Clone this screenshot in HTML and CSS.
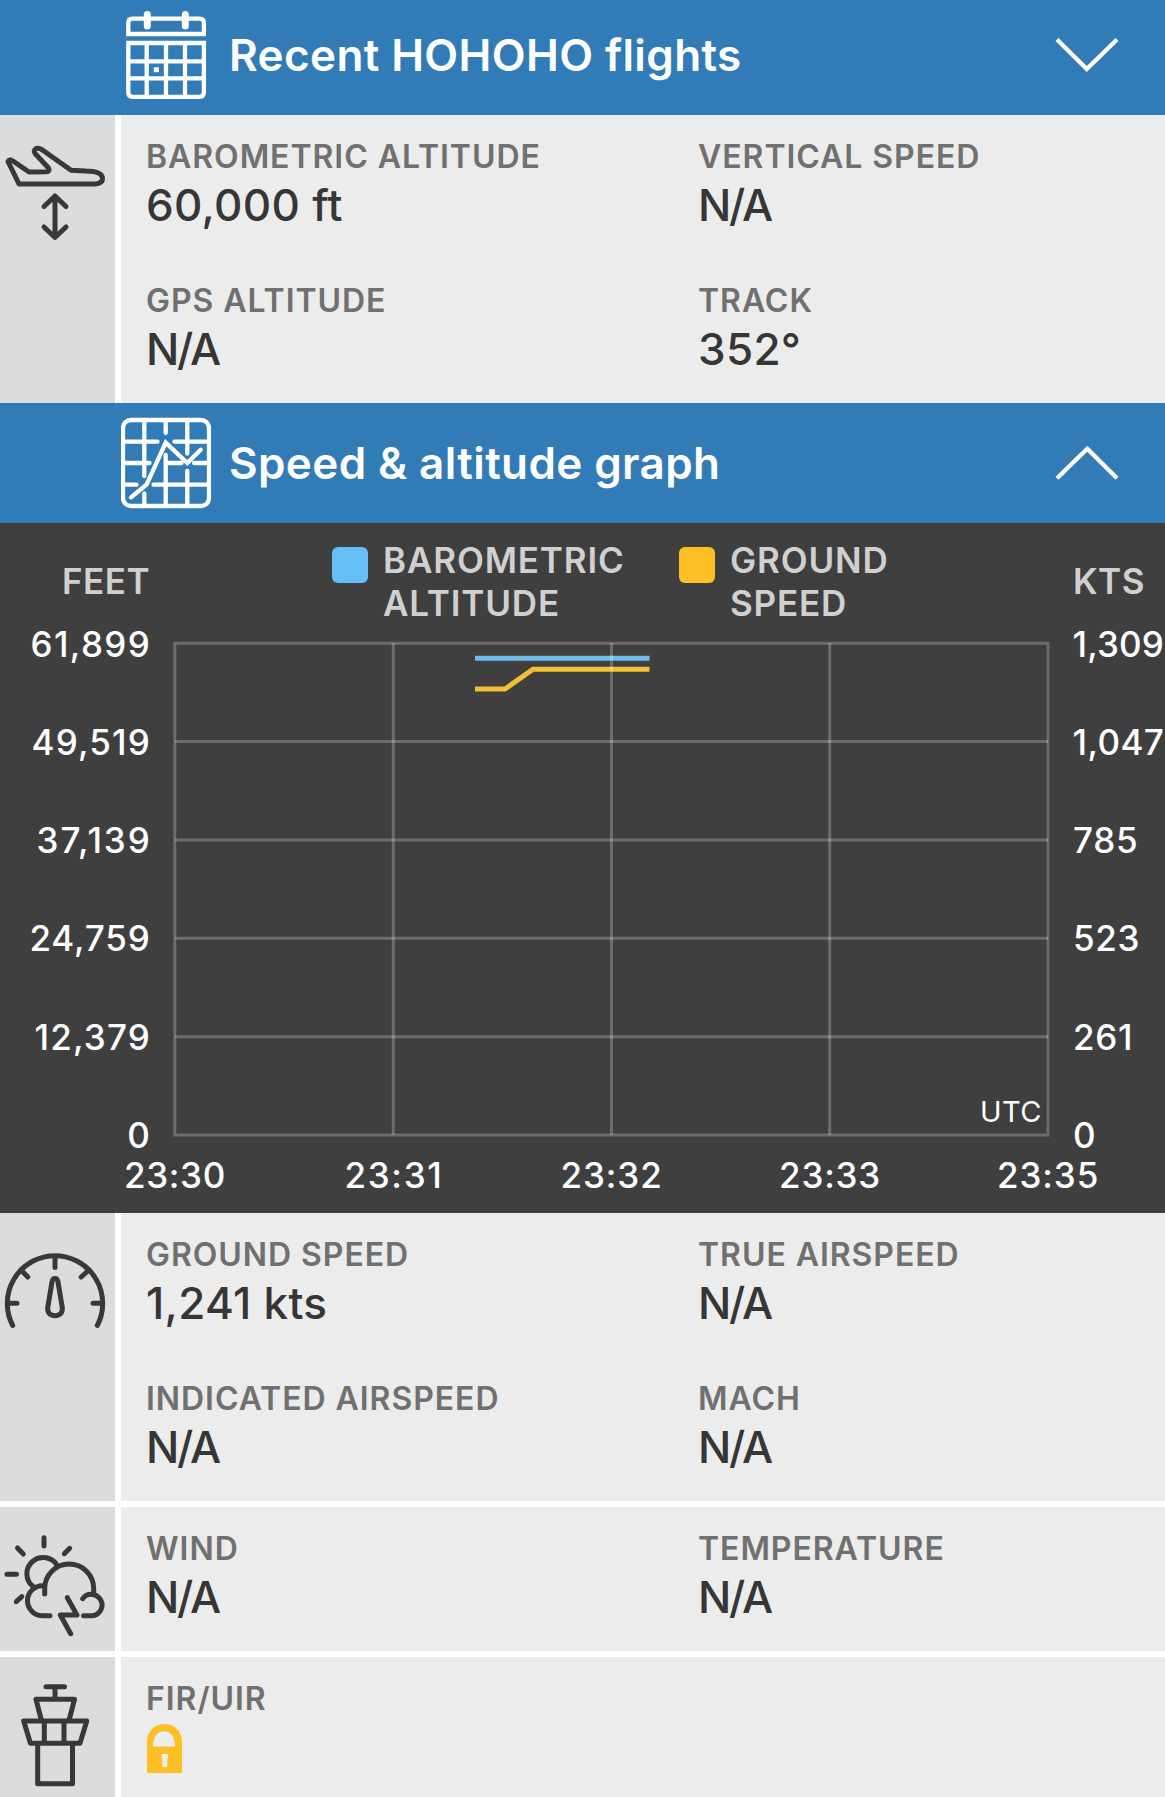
FILE: index.html
```html
<!DOCTYPE html>
<html lang="en">
<head>
  <meta charset="UTF-8">
  <title>Flight details</title>
  <link rel="stylesheet" href="styles.css">
</head>
<body>
  <div class="bar">
    <svg class="bar-icon" viewBox="121 0 90 115">
      <path d="M128.3 34V23q0-4.300 4.300-4.300h67q4.300 0 4.300 4.300v11z"/>
      <path d="M128.300 43h75.600v49.500q0 4.300-4.300 4.300h-67q-4.300 0-4.300-4.300zM146.700 43v54M166 43v54M185 43v54M128 61.300h76M128 78.300h76"/>
      <path class="pins" d="M147.300 14.500v11.500M185.300 14.500v11.500"/>
      <rect class="dot" x="153.800" y="67.200" width="5" height="5"/>
    </svg>
    <div class="bar-title">Recent HOHOHO flights</div>
    <svg class="chevron" viewBox="1050 0 74 115"><path d="M1057 39.500l29.800 29.500 30.200-29.500"/></svg>
  </div>

  <div class="info">
    <div class="side">
      <svg class="side-icon" viewBox="0 0 115 144">
        <path d="M8 46.500L19 69H95Q102.500 68.500 102.500 63.500C102.500 58 96 56.200 86 56L71 55.300L42.500 35Q38 32.300 35.500 34Q33 36 35.500 39L48.500 53Q50.500 56.500 46.500 56.800L29 57L13 46Q9 43.500 8 46.500z"/>
        <path d="M55 81v41M44 91.500l11-10.500 11 10.500M44 112l11 10.500 11-10.500"/>
      </svg>
    </div>
    <div class="cells">
      <div class="cell"><div class="label">BAROMETRIC ALTITUDE</div><div class="value">60,000 ft</div></div>
      <div class="cell"><div class="label">VERTICAL SPEED</div><div class="value na">N/A</div></div>
      <div class="cell"><div class="label">GPS ALTITUDE</div><div class="value na">N/A</div></div>
      <div class="cell"><div class="label">TRACK</div><div class="value">352°</div></div>
    </div>
  </div>

  <div class="bar bar-open">
    <svg class="bar-icon" viewBox="121 0 90 120">
      <rect x="123" y="17" width="86" height="86" rx="8"/>
      <path d="M144.300 17v56M144.300 90.500v12M165.700 17v13M165.700 52v51M187.300 17v33.500M187.300 68v35"/>
      <path d="M123 38.700h34.500M174.500 38.700h34M123 60h26.500M166 60h15.500M194 60h15M123 81.700h13.500M153.500 81.700h55"/>
      <path d="M131 94.300l15.700-13 19-41.600 21.600 20.300 13.400-13.300"/>
    </svg>
    <div class="bar-title">Speed &amp; altitude graph</div>
    <svg class="chevron" viewBox="1050 0 74 120"><path d="M1057 75.300l30.300-29.500 29.700 29.500"/></svg>
  </div>

  <div class="chart">
    <div class="chart-head">
      <div class="unit unit-left">FEET</div>
      <div class="legend">
        <span class="swatch swatch-alt"></span>
        <div class="legend-text">BAROMETRIC<br>ALTITUDE</div>
      </div>
      <div class="legend legend-speed">
        <span class="swatch swatch-speed"></span>
        <div class="legend-text">GROUND<br>SPEED</div>
      </div>
      <div class="unit unit-right">KTS</div>
    </div>
    <svg class="plot" viewBox="0 615 1165 598">
      <polyline class="line-alt" points="475,658.300 649.500,658.300"/>
      <polyline class="line-speed" points="475,689 505,689 533,669.300 649.500,669.300"/>
      <g class="grid">
        <rect x="174.800" y="643.300" width="873.200" height="491.700"/>
        <path d="M393.300 643v492M611.500 643v492M829.700 643v492"/>
        <path d="M175 741.600h873M175 840h873M175 938.300h873M175 1036.700h873"/>
      </g>
      <g class="axis axis-left">
        <text x="150.500" y="656.500" textLength="120">61,899</text>
        <text x="150.500" y="755" textLength="119">49,519</text>
        <text x="150.500" y="853" textLength="114">37,139</text>
        <text x="150.500" y="951" textLength="121">24,759</text>
        <text x="150.500" y="1050" textLength="116">12,379</text>
        <text x="150.500" y="1148">0</text>
      </g>
      <g class="axis">
        <text x="1072.500" y="656.500" textLength="92">1,309</text>
        <text x="1072.500" y="755" textLength="92">1,047</text>
        <text x="1073" y="853">785</text>
        <text x="1073" y="951">523</text>
        <text x="1073" y="1050">261</text>
        <text x="1073" y="1148">0</text>
      </g>
      <g class="axis axis-time">
        <text x="175" y="1188" textLength="102">23:30</text>
        <text x="393.500" y="1188" textLength="98">23:31</text>
        <text x="611.500" y="1188" textLength="102">23:32</text>
        <text x="830" y="1188" textLength="102">23:33</text>
        <text x="1048" y="1188" textLength="102">23:35</text>
      </g>
      <text class="utc" x="1042" y="1122">UTC</text>
    </svg>
  </div>

  <div class="info">
    <div class="side">
      <svg class="side-icon" viewBox="0 0 115 144">
        <path d="M12.700 112.500A47.700 47.700 0 1 1 97.300 112.500"/>
        <path d="M55 44v10.500M21 57l6.800 7M89 57l-7.800 7M7.500 90.300h9.500M102.500 90.300h-9.500"/>
        <path d="M55 65.500Q52.500 65.500 52 69L47.800 94C47 99.500 50 102.700 55 102.700S63 99.500 62.200 94L58 69Q57.500 65.500 55 65.500z"/>
      </svg>
    </div>
    <div class="cells">
      <div class="cell"><div class="label">GROUND SPEED</div><div class="value">1,241 kts</div></div>
      <div class="cell"><div class="label">TRUE AIRSPEED</div><div class="value na">N/A</div></div>
      <div class="cell"><div class="label">INDICATED AIRSPEED</div><div class="value na">N/A</div></div>
      <div class="cell"><div class="label">MACH</div><div class="value na">N/A</div></div>
    </div>
  </div>

  <div class="info info-gap">
    <div class="side">
      <svg class="side-icon" viewBox="0 0 115 144">
        <path d="M44 30.700v8.300M17.500 41l5.800 6M69.700 41.300l-5.400 5.400M7 67.300h9.500M16.300 94.700l5.500-5"/>
        <path d="M33 79.500A16.300 16.300 0 1 1 57.500 59"/>
        <path d="M44.700 87v-5.500a24.500 24.500 0 0 1 49 0v5"/>
        <path d="M43 78.700A15 15 0 0 0 42 108.700h8"/>
        <path d="M82.700 91.700A10.700 10.700 0 1 1 92.500 108.700h-9"/>
        <path d="M67.300 90.700l9.700 17.300h-16.700l10.400 18.700"/>
      </svg>
    </div>
    <div class="cells">
      <div class="cell"><div class="label">WIND</div><div class="value na">N/A</div></div>
      <div class="cell"><div class="label">TEMPERATURE</div><div class="value na">N/A</div></div>
    </div>
  </div>

  <div class="info info-gap info-last">
    <div class="side">
      <svg class="side-icon" viewBox="0 0 115 144">
        <path d="M46 29.700h18.500M55 30v12M36 42.300h38.500l-5.500 21.200M36 42.300l5.500 21.200"/>
        <path d="M23.700 64h63.100l-6.800 22.200h-49.600zM44.300 64v22M64 64v22M37.700 86.200v40.500h34.800v-40.500"/>
      </svg>
    </div>
    <div class="cells">
      <div class="cell">
        <div class="label">FIR/UIR</div>
        <svg class="lock" viewBox="0 0 35 49">
          <path fill-rule="evenodd" d="M0 49V18C0 7 7.500 0 17.500 0S35 7 35 18V49zM6 22.600H28C28 13 23.500 7.200 17 7.200S6 13 6 22.600zM14.700 30v4l.6 1v8h5v-8l.6-1v-4z"/>
        </svg>
      </div>
    </div>
  </div>
</body>
</html>
```

FILE: styles.css
```css
*{
  box-sizing: border-box;
}
body{
  margin: 0;
  height: 1797px;
  overflow: hidden;
  background-color: #fff;
  font-family: Inter, "Liberation Sans", sans-serif;
}
svg{
  display: block;
  flex-shrink: 0;
}

/* blue section headers */
.bar{
  display: flex;
  align-items: center;
  height: 115px;
  padding: 0 41px 0 121px;
  background-color: #317cb6;
  color: #fff;
}
.bar-open{
  height: 120px;
}
.bar-icon{
  width: 90px;
  height: 100%;
  fill: none;
  stroke: #fff;
  stroke-width: 4.300;
  stroke-linecap: round;
}
.bar-icon .pins{
  stroke-width: 7;
}
.bar-icon .dot{
  fill: #fff;
  stroke: none;
}
.bar-title{
  flex: 1;
  margin: 0 0 6px 18px;
  font-size: 44px;
  font-weight: 600;
  line-height: 54px;
  letter-spacing: 0.400px;
  white-space: nowrap;
}
.bar-open .bar-title{
  margin-bottom: 1px;
}
.chevron{
  width: 74px;
  height: 100%;
  fill: none;
  stroke: #fff;
  stroke-width: 4.300;
}

/* detail rows */
.info{
  display: flex;
  gap: 6px;
}
.info-gap{
  margin-top: 6px;
}
.side{
  width: 115px;
  background-color: #dcdcdc;
}
.side-icon{
  width: 115px;
  height: 144px;
  fill: none;
  stroke: #383838;
  stroke-width: 5;
  stroke-linecap: round;
  stroke-linejoin: round;
}
.cells{
  flex: 1;
  display: grid;
  grid-template-columns: 552px 1fr;
  padding-left: 25px;
  background-color: #ececec;
}
.cell{
  height: 144px;
  padding-top: 22px;
}
.label{
  color: #707070;
  font-size: 32px;
  font-weight: 600;
  line-height: 40px;
  letter-spacing: 0.950px;
}
.value{
  color: #363636;
  font-size: 44px;
  font-weight: 500;
  line-height: 57px;
  letter-spacing: 0.300px;
}
.na{
  letter-spacing: -2.200px;
}
.lock{
  width: 35px;
  height: 49px;
  margin: 5px 0 0 1px;
  fill: #fcc024;
}

/* graph */
.chart{
  height: 690px;
  background-color: #3f3f3f;
}
.chart-head{
  display: flex;
  height: 92px;
  color: #d0d0d0;
  font-size: 35px;
  font-weight: 600;
  line-height: 43px;
  letter-spacing: 0.500px;
}
.unit{
  padding-top: 37px;
}
.unit-left{
  width: 150px;
  text-align: right;
}
.unit-right{
  padding-left: 2px;
}
.legend{
  display: flex;
  gap: 15px;
  width: 347px;
  margin-left: 182px;
  padding-top: 16px;
  letter-spacing: 0.850px;
}
.legend-speed{
  width: 392px;
  margin-left: 0;
}
.swatch{
  width: 36px;
  height: 36px;
  margin-top: 8px;
  border-radius: 6px;
}
.swatch-alt{
  background-color: #65bef4;
}
.swatch-speed{
  background-color: #fcc024;
}
.plot{
  width: 1165px;
  height: 598px;
}
.grid{
  fill: none;
  stroke: #fff;
  stroke-width: 3;
  stroke-opacity: 0.240;
}
.line-alt,
.line-speed{
  fill: none;
  stroke: #6fbdec;
  stroke-width: 5;
}
.line-speed{
  stroke: #f3c035;
}
.axis{
  fill: #fff;
  font-size: 35px;
  font-weight: 500;
  letter-spacing: 0.700px;
}
.axis-left{
  text-anchor: end;
}
.axis-time{
  text-anchor: middle;
}
.utc{
  fill: #fff;
  font-size: 29px;
  letter-spacing: 0.500px;
  text-anchor: end;
}
```
